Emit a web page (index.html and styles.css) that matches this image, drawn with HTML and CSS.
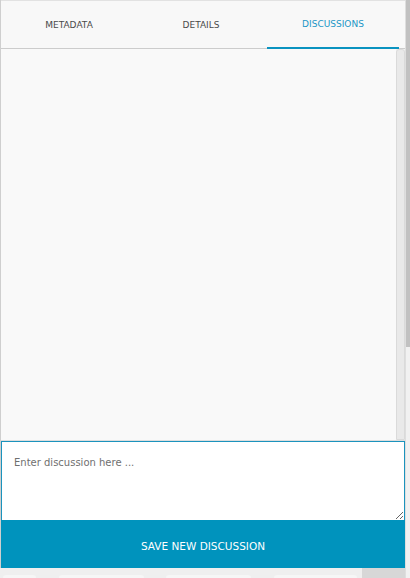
FILE: index.html
```html
<!DOCTYPE html>
<html>
<head>
<meta charset="utf-8">
<link rel="stylesheet" href="styles.css">
</head>
<body>
<div class="page">
  <div class="panel">
    <div class="tabs">
      <div class="tab">METADATA</div>
      <div class="tab">DETAILS</div>
      <div class="tab active">DISCUSSIONS</div>
    </div>
    <div class="content">
      <div class="list"></div>
      <div class="inner-scroll"><div class="inner-thumb"></div></div>
    </div>
    <textarea class="entry" placeholder="Enter discussion here ..."></textarea>
    <button class="save">SAVE NEW DISCUSSION</button>
    <div class="under">
      <div class="ghost g1"></div>
      <div class="ghost g2"></div>
      <div class="ghost g3"></div>
      <div class="ghost g4"></div>
      <div class="under-block"></div>
    </div>
  </div>
  <div class="page-scroll"><div class="page-thumb"></div></div>
</div>
</body>
</html>
```
FILE: styles.css
```css
html, body {
  margin: 0;
  padding: 0;
  height: 578px;
  overflow: hidden;
  background: #efefef;
  font-family: "DejaVu Sans", Verdana, sans-serif;
}
.page {
  display: flex;
  height: 578px;
}
.panel {
  width: 405px;
  display: flex;
  flex-direction: column;
  border-left: 1px solid #cfcfcf;
  box-sizing: border-box;
}
.tabs {
  height: 49px;
  box-sizing: border-box;
  border-top: 1px solid #e2e2e2;
  border-bottom: 1px solid #cccccc;
  background: #f8f8f8;
  display: flex;
  padding-left: 2px;
  padding-right: 6px;
}
.tab {
  flex: 1;
  display: flex;
  align-items: center;
  justify-content: center;
  font-size: 9px;
  color: #4a4a4a;
  margin-bottom: -1px;
  padding-bottom: 1px;
}
.tab.active {
  color: #1a96c6;
  border-bottom: 2px solid #0a93c0;
  padding-bottom: 0;
}
.content {
  height: 392px;
  display: flex;
  background: #f9f9f9;
  border-bottom: 1px solid #dddddd;
  box-sizing: border-box;
}
.list {
  flex: 1;
}
.inner-scroll {
  width: 9px;
  display: flex;
  background: #f0f0f0;
}
.inner-thumb {
  flex: 1;
  background: #e9e9e9;
  border: 1px solid #dadada;
  border-radius: 3px 3px 0 0;
}
.entry {
  display: block;
  height: 79px;
  width: 404px;
  margin: 0;
  box-sizing: border-box;
  border: 1px solid #1b93bd;
  border-bottom: none;
  background: #ffffff;
  padding: 15px 12px 12px;
  font-family: "DejaVu Sans", Verdana, sans-serif;
  font-size: 10px;
  color: #333;
  resize: vertical;
  outline: none;
}
.entry::placeholder {
  color: #6f6f6f;
}
.save {
  display: block;
  width: 404px;
  height: 48px;
  margin: 0;
  border: none;
  background: #0093bd;
  color: #ffffff;
  font-family: "DejaVu Sans", Verdana, sans-serif;
  font-size: 10.5px;
  padding: 0;
  padding-top: 4px;
}
.under {
  flex: 1;
  display: flex;
  align-items: flex-end;
  background: #efefef;
  margin-left: -1px;
}
.ghost {
  height: 3px;
  background: #f6f6f6;
  border-radius: 3px 3px 0 0;
}
.g1 { width: 33px; margin-left: 3px; }
.g2 { width: 85px; margin-left: 23px; }
.g3 { width: 85px; margin-left: 22px; }
.g4 { width: 83px; margin-left: 23px; }
.under-block {
  align-self: stretch;
  width: 43px;
  margin-left: auto;
  background: #d7d7d7;
}
.page-scroll {
  width: 5px;
  display: flex;
  flex-direction: column;
  background: #f1f1f1;
  border-left: 1px solid #dedede;
}
.page-thumb {
  height: 347px;
  background: #c1c1c1;
}
```
